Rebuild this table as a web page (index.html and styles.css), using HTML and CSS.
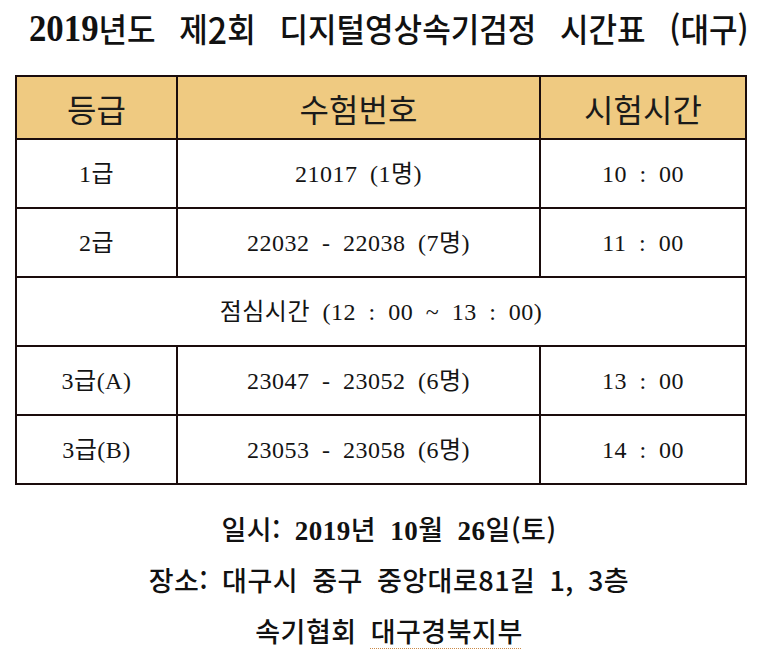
FILE: index.html
```html
<!DOCTYPE html>
<html lang="ko">
<head>
<meta charset="utf-8">
<title>2019년도 제2회 디지털영상속기검정 시간표 (대구)</title>
<link rel="stylesheet" href="styles.css">
</head>
<body>
<h1 class="title"><span class="title-text"><span class="title-num">2019</span>년도 제<span class="title-num2">2</span>회 디지털영상속기검정 시간표 (대구)</span></h1>
<div class="schedule">
  <div class="cell head">등급</div>
  <div class="cell head">수험번호</div>
  <div class="cell head">시험시간</div>

  <div class="cell">1급</div>
  <div class="cell">21017 (1명)</div>
  <div class="cell">10 : 00</div>

  <div class="cell">2급</div>
  <div class="cell">22032 - 22038 (7명)</div>
  <div class="cell">11 : 00</div>

  <div class="cell full">점심시간 (12 : 00 ~ 13 : 00)</div>

  <div class="cell">3급(A)</div>
  <div class="cell">23047 - 23052 (6명)</div>
  <div class="cell">13 : 00</div>

  <div class="cell">3급(B)</div>
  <div class="cell">23053 - 23058 (6명)</div>
  <div class="cell">14 : 00</div>
</div>
<div class="info">
  <p class="line">일시: <span class="serif-num">2019</span>년 <span class="serif-num">10</span>월 <span class="serif-num">26</span>일(토)</p>
  <p class="line">장소: 대구시 중구 중앙대로81길 1, 3층</p>
  <p class="line">속기협회 <span class="spell">대구경북지부</span></p>
</div>
</body>
</html>
```
FILE: styles.css
```css
html, body {
  margin: 0;
  padding: 0;
  background: #ffffff;
  color: #111111;
}

body {
  font-family: "Noto Sans CJK KR", "Noto Sans", sans-serif;
}

.title {
  margin: 5px 0 0 0;
  padding-left: 11px;
  height: 45px;
  display: flex;
  justify-content: center;
  align-items: center;
  font-size: 33px;
  font-weight: 500;
  white-space: nowrap;
}

.title-text {
  display: inline-block;
  flex: none;
  transform: scaleX(0.94);
  transform-origin: center;
  word-spacing: 16px;
  line-height: 40px;
}

.title-num {
  font-family: "Liberation Serif", serif;
  font-weight: 700;
  font-size: 37px;
  line-height: 40px;
  vertical-align: top;
  position: relative;
  top: 1px;
}

.title-num2 {
  font-size: 36px;
  line-height: 40px;
  vertical-align: top;
}

.serif-num {
  font-family: "Liberation Serif", serif;
  font-weight: 700;
}

.schedule {
  margin: 25px 0 0 15px;
  width: 728px;
  display: grid;
  grid-template-columns: 159px 361px 204px;
  grid-template-rows: 61px repeat(5, 67px);
  gap: 2px;
  padding: 2px;
  background: #1a0c0c;
}

.cell {
  background: #ffffff;
  display: flex;
  align-items: center;
  justify-content: center;
  font-family: "Liberation Serif", "Noto Sans CJK KR", serif;
  font-size: 24px;
  line-height: 30px;
  letter-spacing: 0.5px;
  word-spacing: 6px;
  color: #141414;
  white-space: pre;
}

.cell.head {
  background: #efca81;
  font-family: "Noto Sans CJK KR", sans-serif;
  font-size: 32px;
  line-height: 40px;
  letter-spacing: 0;
  word-spacing: 0;
  color: #1a1a1a;
}

.cell.full {
  grid-column: 1 / -1;
}

.info {
  margin-top: 18px;
  padding-left: 11px;
  text-align: center;
}

.line {
  margin: 0;
  height: 51px;
  line-height: 51px;
  font-size: 27px;
  font-weight: 500;
  letter-spacing: 0.5px;
  word-spacing: 6px;
  color: #111111;
}

.spell {
  text-decoration: underline dotted #c98a4a;
  text-decoration-thickness: 1px;
  text-underline-offset: 6px;
}
```
